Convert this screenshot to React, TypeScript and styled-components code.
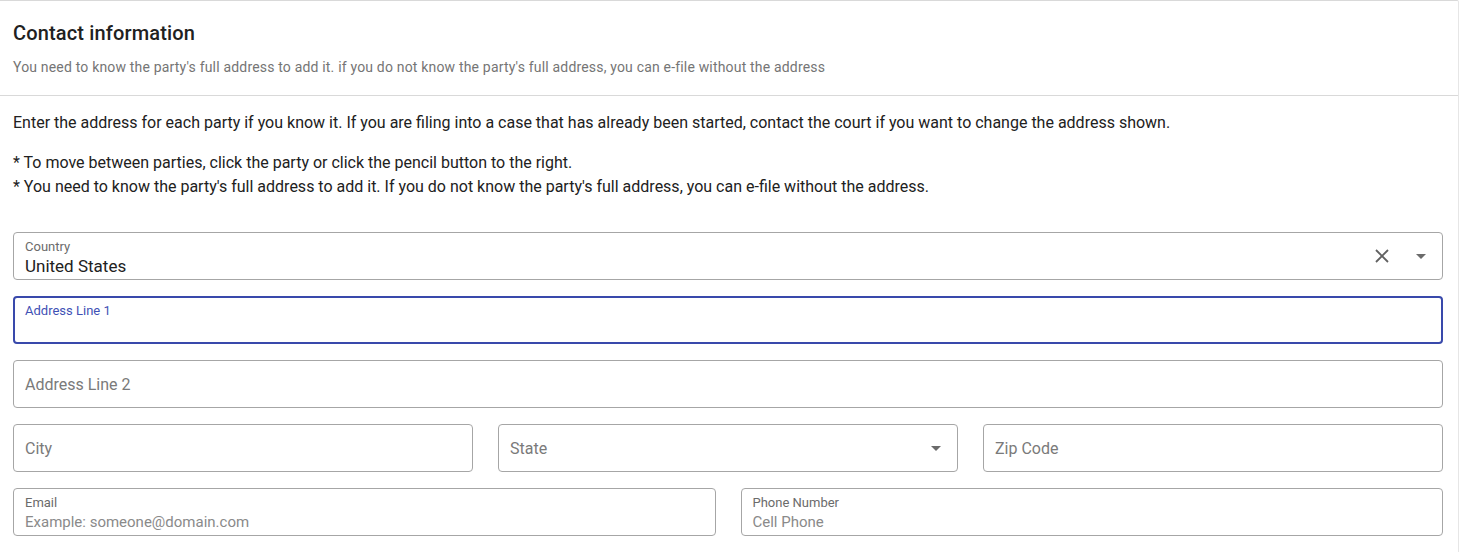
import styled, { createGlobalStyle } from 'styled-components';

const GlobalStyle = createGlobalStyle`
  body {
    margin: 0;
    background: #ffffff;
    font-family: Roboto, "Liberation Sans", sans-serif;
    color: #212121;
  }
`;

const Panel = styled.section`
  border-top: 1px solid #d9d9d9;
  border-right: 1px solid #e6e6e6;
  border-top-right-radius: 2px;
`;

const Header = styled.header`
  padding: 20px 15px 19px 13px;
  border-bottom: 1px solid #d9d9d9;
`;

const Title = styled.h1`
  margin: 0;
  font-size: 20px;
  line-height: 24px;
  font-weight: 500;
  letter-spacing: 0.15px;
  color: #212121;
`;

const Subtitle = styled.p`
  margin: 13px 0 0;
  font-size: 14px;
  line-height: 18px;
  letter-spacing: 0.18px;
  color: #757575;
`;

const Body = styled.div`
  padding: 15px 15px 16px 13px;
`;

const Paragraph = styled.p`
  margin: 0 0 16px;
  font-size: 16px;
  line-height: 24px;
  color: #212121;
`;

const Form = styled.div`
  display: flex;
  flex-direction: column;
  gap: 16px;
  margin-top: 33px;
`;

const Row = styled.div<{ $cols: number }>`
  display: grid;
  grid-template-columns: repeat(${p => p.$cols}, 1fr);
  column-gap: 25px;
`;

const Field = styled.div<{ $focused?: boolean }>`
  box-sizing: border-box;
  height: 48px;
  border: ${p => (p.$focused ? '2px solid #3949ab' : '1px solid #a6a6a6')};
  border-radius: 4px;
  padding: ${p => (p.$focused ? '0 8px 0 10px' : '0 9px 0 11px')};
  display: flex;
  align-items: center;
  gap: 8px;
`;

const FieldText = styled.div`
  flex: 1;
  display: flex;
  flex-direction: column;
  justify-content: center;
  min-width: 0;
  padding-top: 3px;
`;

const Label = styled.span<{ $focused?: boolean }>`
  font-size: 13px;
  line-height: 15px;
  color: ${p => (p.$focused ? '#3f51b5' : '#6b6b6b')};
`;

const Value = styled.span<{ $placeholder?: boolean }>`
  font-size: ${p => (p.$placeholder ? '15px' : '17px')};
  line-height: 20px;
  margin-top: 2px;
  color: ${p => (p.$placeholder ? '#8a8a8a' : '#212121')};
`;

const Placeholder = styled.span`
  flex: 1;
  font-size: 16px;
  line-height: 20px;
  margin-top: 2px;
  color: #7a7a7a;
`;

const Spacer = styled.span`
  height: 20px;
  margin-top: 2px;
`;

const IconGroup = styled.div`
  display: flex;
  align-items: center;
  gap: 15px;
`;

const IconButton = styled.span`
  display: inline-flex;
  align-items: center;
  justify-content: center;
  width: 24px;
  height: 24px;
  color: #616161;
`;

const Caret = () => (
  <IconButton>
    <svg width="10" height="5" viewBox="0 0 10 5">
      <path d="M0 0 L10 0 L5 5 Z" fill="#6b6b6b" />
    </svg>
  </IconButton>
);

const ClearIcon = () => (
  <IconButton>
    <svg width="14" height="14" viewBox="0 0 14 14">
      <path d="M1 1 L13 13 M13 1 L1 13" stroke="#616161" strokeWidth="1.8" />
    </svg>
  </IconButton>
);

export default function App() {
  return (
    <>
      <GlobalStyle />
      <Panel>
        <Header>
          <Title>Contact information</Title>
          <Subtitle>
            You need to know the party's full address to add it. if you do not know the party's full address, you can e-file without the address
          </Subtitle>
        </Header>
        <Body>
          <Paragraph>
            Enter the address for each party if you know it. If you are filing into a case that has already been started, contact the court if you want to change the address shown.
          </Paragraph>
          <Paragraph>
            * To move between parties, click the party or click the pencil button to the right.
            <br />
            * You need to know the party's full address to add it. If you do not know the party's full address, you can e-file without the address.
          </Paragraph>
          <Form>
            <Field>
              <FieldText>
                <Label>Country</Label>
                <Value>United States</Value>
              </FieldText>
              <IconGroup>
                <ClearIcon />
                <Caret />
              </IconGroup>
            </Field>
            <Field $focused>
              <FieldText>
                <Label $focused>Address Line 1</Label>
                <Spacer />
              </FieldText>
            </Field>
            <Field>
              <Placeholder>Address Line 2</Placeholder>
            </Field>
            <Row $cols={3}>
              <Field>
                <Placeholder>City</Placeholder>
              </Field>
              <Field>
                <Placeholder>State</Placeholder>
                <Caret />
              </Field>
              <Field>
                <Placeholder>Zip Code</Placeholder>
              </Field>
            </Row>
            <Row $cols={2}>
              <Field>
                <FieldText>
                  <Label>Email</Label>
                  <Value $placeholder>Example: someone@domain.com</Value>
                </FieldText>
              </Field>
              <Field>
                <FieldText>
                  <Label>Phone Number</Label>
                  <Value $placeholder>Cell Phone</Value>
                </FieldText>
              </Field>
            </Row>
          </Form>
        </Body>
      </Panel>
    </>
  );
}
